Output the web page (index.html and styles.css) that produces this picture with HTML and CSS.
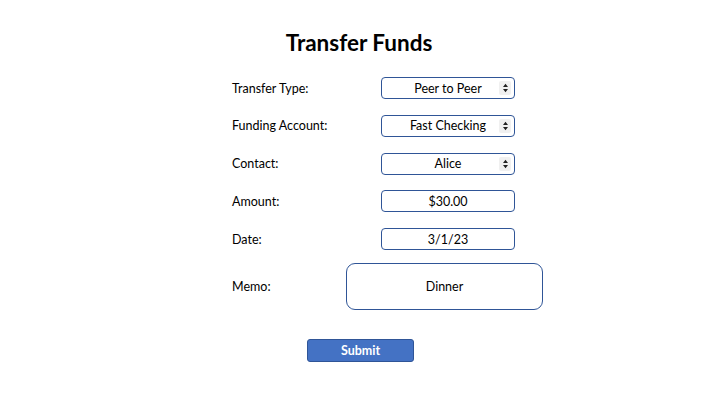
FILE: index.html
```html
<!DOCTYPE html>
<html>
<head>
<meta charset="utf-8">
<link rel="stylesheet" href="styles.css">
</head>
<body>
<div class="page">
  <h1 class="title">Transfer Funds</h1>
  <div class="form">
    <div class="row">
      <span class="label">Transfer Type:</span>
      <div class="field select"><span class="value">Peer to Peer</span><span class="arrows"><svg width="7" height="10" viewBox="0 0 7 10"><path d="M3.5 0.8 L6 4 L1 4 Z M1 6 L6 6 L3.5 9.2 Z" fill="#222"/></svg></span></div>
    </div>
    <div class="row">
      <span class="label">Funding Account:</span>
      <div class="field select"><span class="value">Fast Checking</span><span class="arrows"><svg width="7" height="10" viewBox="0 0 7 10"><path d="M3.5 0.8 L6 4 L1 4 Z M1 6 L6 6 L3.5 9.2 Z" fill="#222"/></svg></span></div>
    </div>
    <div class="row">
      <span class="label">Contact:</span>
      <div class="field select"><span class="value">Alice</span><span class="arrows"><svg width="7" height="10" viewBox="0 0 7 10"><path d="M3.5 0.8 L6 4 L1 4 Z M1 6 L6 6 L3.5 9.2 Z" fill="#222"/></svg></span></div>
    </div>
    <div class="row">
      <span class="label">Amount:</span>
      <div class="field"><span class="value">$30.00</span></div>
    </div>
    <div class="row">
      <span class="label">Date:</span>
      <div class="field"><span class="value">3/1/23</span></div>
    </div>
    <div class="row row-memo">
      <span class="label label-memo">Memo:</span>
      <div class="field memo"><span class="value">Dinner</span></div>
    </div>
  </div>
  <div class="actions">
    <button class="submit">Submit</button>
  </div>
</div>
</body>
</html>
```
FILE: styles.css
```css
html, body {
  margin: 0;
  padding: 0;
  background: #ffffff;
}
.page {
  width: 720px;
  height: 405px;
  font-family: Lato, "Open Sans", sans-serif;
  color: #000;
  display: flex;
  flex-direction: column;
}
.title {
  margin: 28px 0 0 0;
  text-align: center;
  font-size: 22.5px;
  font-weight: 700;
  line-height: 30px;
  padding-right: 2px;
}
.form {
  margin-top: 19px;
  padding-left: 232px;
  display: flex;
  flex-direction: column;
  gap: 15.8px;
}
.row {
  display: flex;
  align-items: center;
  height: 22px;
}
.label {
  width: 149px;
  font-size: 12.5px;
}
.label-memo {
  width: 114px;
}
.field {
  position: relative;
  box-sizing: border-box;
  width: 134px;
  height: 22px;
  border: 1px solid #2f5597;
  border-radius: 4px;
  display: flex;
  align-items: center;
  justify-content: center;
  font-size: 12.5px;
}
.arrows {
  position: absolute;
  right: 3px;
  top: 3px;
  width: 12px;
  height: 14px;
  background: #f0f0f0;
  display: flex;
  align-items: center;
  justify-content: center;
  border-radius: 2px;
}
.row-memo {
  margin-top: -3px;
  height: 47px;
}
.memo {
  width: 197px;
  height: 47px;
  border-radius: 9px;
}
.actions {
  margin-top: 29px;
  padding-left: 307px;
}
.submit {
  width: 107px;
  height: 23px;
  background: #4472c4;
  border: 1px solid #2f5597;
  border-radius: 3px;
  color: #fff;
  font-family: Lato, "Open Sans", sans-serif;
  font-weight: 700;
  font-size: 12.5px;
  padding: 0;
}
```
